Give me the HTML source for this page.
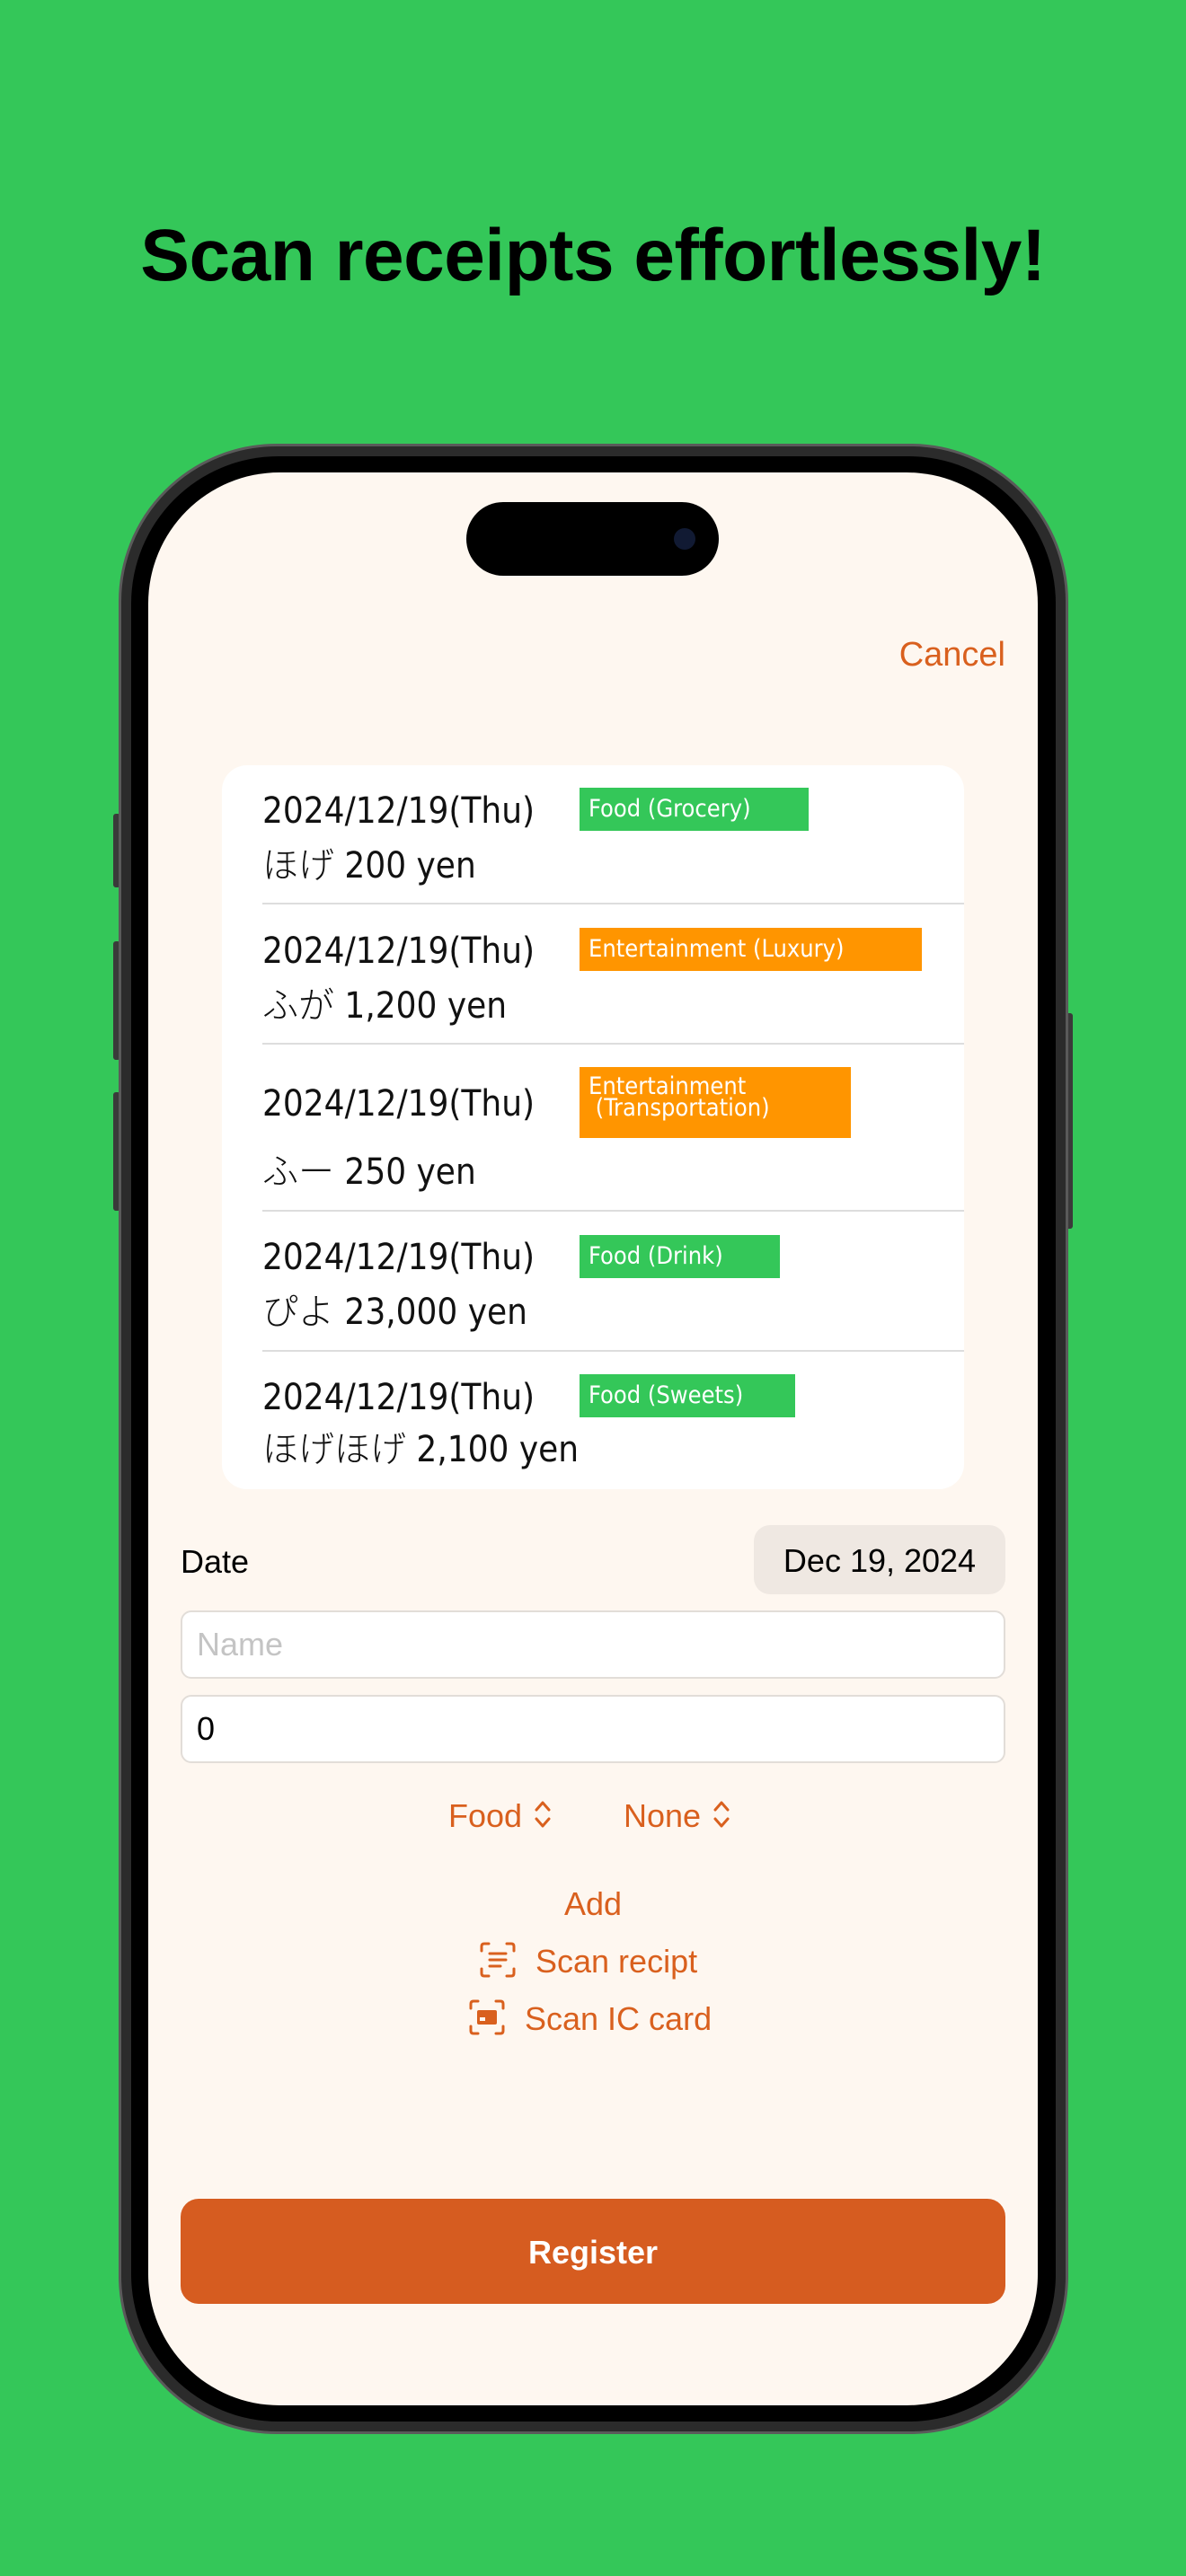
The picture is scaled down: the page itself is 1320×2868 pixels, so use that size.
<!DOCTYPE html>
<html><head><meta charset="utf-8"><style>
*{margin:0;padding:0;box-sizing:border-box}
body{width:1320px;height:2868px;background:#34c759;position:relative;overflow:hidden;font-family:"Liberation Sans","Noto Sans CJK JP",sans-serif}
.a{position:absolute}
h1{position:absolute;left:0;width:1320px;top:238px;text-align:center;font-size:82px;font-weight:bold;color:#000;letter-spacing:-0.5px}
.frame{left:132px;top:494px;width:1057px;height:2216px;border-radius:176px;background:#2b2b2b;border:3px solid #5a5a5a}
.bez{left:146px;top:508px;width:1029px;height:2188px;border-radius:164px;background:#000}
.scr{left:165px;top:526px;width:990px;height:2152px;border-radius:146px;background:#fef7f0;overflow:hidden}
.btn{background:#3a3a3a;border-radius:3px;width:8px}
.card{left:247px;top:852px;width:826px;height:806px;background:#fff;border-radius:28px}
.hw{position:absolute;left:292px;font-size:40px;color:#111;font-family:"DejaVu Sans Condensed","Liberation Sans","Noto Sans CJK JP",sans-serif;font-weight:300;line-height:1;white-space:nowrap}
.tag{position:absolute;left:645px;color:#fff;font-size:27px;line-height:24px;padding:12px 10px;font-family:"DejaVu Sans Condensed","Liberation Sans","Noto Sans CJK JP",sans-serif;white-space:nowrap}
.g{background:#34c759}.o{background:#ff9500}
.div{position:absolute;left:292px;width:781px;height:2px;background:#ddd}
.or{color:#d9601e}
.field{left:201px;width:918px;height:76px;background:#fff;border:2px solid #e2ddd8;border-radius:12px;font-size:36px;padding-left:16px;line-height:72px}
</style></head><body>
<h1>Scan receipts effortlessly!</h1>
<div class="a btn" style="left:126px;top:906px;height:82px"></div>
<div class="a btn" style="left:126px;top:1048px;height:132px"></div>
<div class="a btn" style="left:126px;top:1216px;height:132px"></div>
<div class="a btn" style="left:1186px;top:1128px;height:240px"></div>
<div class="a frame"></div>
<div class="a bez"></div>
<div class="a scr"></div>
<div class="a" style="left:519px;top:559px;width:281px;height:82px;border-radius:41px;background:#000"></div>
<div class="a" style="left:750px;top:588px;width:24px;height:24px;border-radius:12px;background:#111a33"></div>
<div class="a or" style="left:960px;width:159px;top:708px;text-align:right;font-size:38px">Cancel</div>
<div class="a card"></div>
<div class="hw" style="top:883px">2024/12/19(Thu)</div>
<div class="tag g" style="top:877px;width:255px;height:48px">Food (Grocery)</div>
<div class="hw" style="top:944px">ほげ 200 yen</div>
<div class="div" style="top:1005px"></div>
<div class="hw" style="top:1039px">2024/12/19(Thu)</div>
<div class="tag o" style="top:1033px;width:381px;height:48px">Entertainment (Luxury)</div>
<div class="hw" style="top:1100px">ふが 1,200 yen</div>
<div class="div" style="top:1161px"></div>
<div class="hw" style="top:1209px">2024/12/19(Thu)</div>
<div class="tag o" style="top:1188px;width:302px;height:79px;padding-top:10px">Entertainment<br>&nbsp;(Transportation)</div>
<div class="hw" style="top:1285px">ふー 250 yen</div>
<div class="div" style="top:1347px"></div>
<div class="hw" style="top:1380px">2024/12/19(Thu)</div>
<div class="tag g" style="top:1375px;width:223px;height:48px">Food (Drink)</div>
<div class="hw" style="top:1441px">ぴよ 23,000 yen</div>
<div class="div" style="top:1503px"></div>
<div class="hw" style="top:1536px">2024/12/19(Thu)</div>
<div class="tag g" style="top:1530px;width:240px;height:48px">Food (Sweets)</div>
<div class="hw" style="top:1594px">ほげほげ 2,100 yen</div>
<div class="a" style="left:201px;top:1718px;font-size:36px;color:#000">Date</div>
<div class="a" style="left:839px;top:1698px;width:280px;height:77px;border-radius:18px;background:#efe8e2;font-size:36px;line-height:79px;text-align:center;color:#000">Dec 19, 2024</div>
<div class="a field" style="top:1793px;color:#c4c4c4">Name</div>
<div class="a field" style="top:1887px;color:#000">0</div>
<div class="a or" style="left:499px;top:2001px;font-size:36px">Food</div>
<svg class="a" style="left:594px;top:2004px" width="20" height="32" viewBox="0 0 20 32" fill="none" stroke="#d9601e" stroke-width="3" stroke-linecap="round" stroke-linejoin="round"><path d="M3 11l7-8 7 8M3 21l7 8 7-8"/></svg>
<div class="a or" style="left:694px;top:2001px;font-size:36px">None</div>
<svg class="a" style="left:793px;top:2004px" width="20" height="32" viewBox="0 0 20 32" fill="none" stroke="#d9601e" stroke-width="3" stroke-linecap="round" stroke-linejoin="round"><path d="M3 11l7-8 7 8M3 21l7 8 7-8"/></svg>
<div class="a or" style="left:560px;width:200px;top:2099px;text-align:center;font-size:36px">Add</div>
<svg class="a" style="left:534px;top:2162px" width="40" height="40" viewBox="0 0 40 40" fill="none" stroke="#d9601e" stroke-width="3" stroke-linecap="round"><path d="M2 10V5q0-3 3-3h5M30 2h5q3 0 3 3v5M38 30v5q0 3-3 3h-5M10 38H5q-3 0-3-3v-5M11 13h18M11 20h18M11 27h12"/></svg>
<div class="a or" style="left:596px;top:2163px;font-size:36px">Scan recipt</div>
<svg class="a" style="left:522px;top:2226px" width="40" height="40" viewBox="0 0 40 40" fill="none" stroke="#d9601e" stroke-width="3" stroke-linecap="round"><path d="M2 10V5q0-3 3-3h5M30 2h5q3 0 3 3v5M38 30v5q0 3-3 3h-5M10 38H5q-3 0-3-3v-5"/><rect x="9" y="12" width="22" height="16" rx="2" fill="#d9601e" stroke="none"/><rect x="12" y="20" width="6" height="4" fill="#fef7f0" stroke="none"/></svg>
<div class="a or" style="left:584px;top:2227px;font-size:36px">Scan IC card</div>
<div class="a" style="left:201px;top:2448px;width:918px;height:117px;border-radius:20px;background:#d65c20;color:#fff;font-weight:bold;font-size:36px;line-height:119px;text-align:center">Register</div>
</body></html>
